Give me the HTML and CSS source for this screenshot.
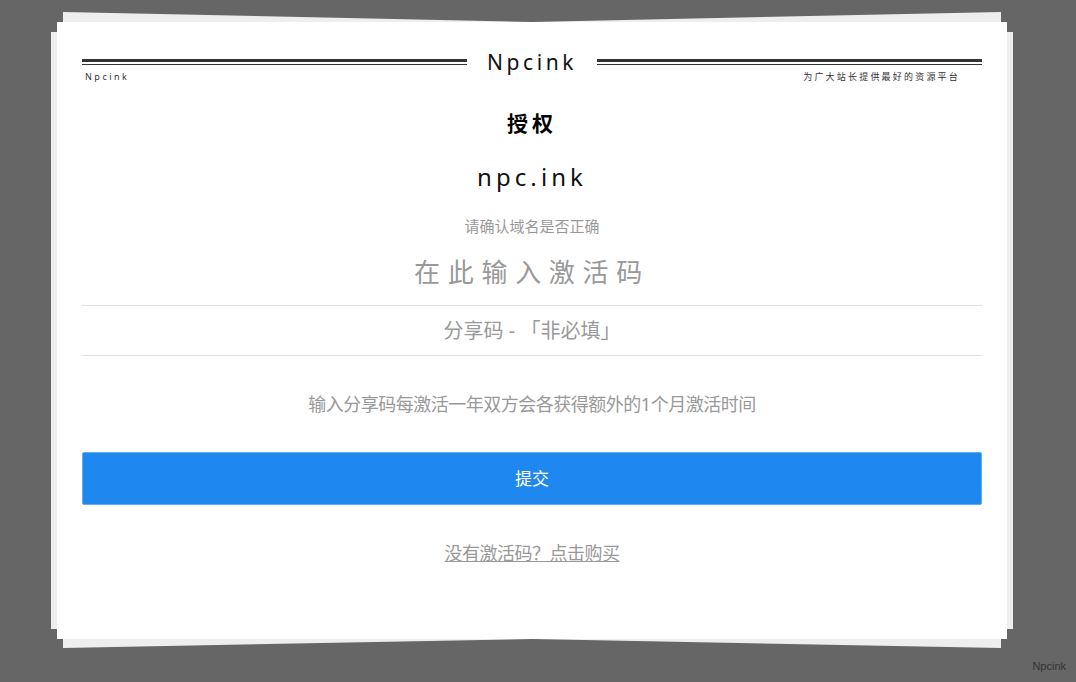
FILE: index.html
```html
<!DOCTYPE html>
<html lang="zh-CN">
<head>
    <meta charset="UTF-8">
    <meta name="viewport" content="width=device-width, initial-scale=1.0">
    <title>授权</title>
    <link rel="stylesheet" href="styles.css">
</head>
<body>
    <div class="stage">
        <div class="sheet sheet-wide"></div>
        <div class="sheet sheet-tall"></div>

        <div class="card">
            <div class="brand-row">
                <span class="brand-line"></span>
                <span class="brand-name">Npcink</span>
                <span class="brand-line"></span>
            </div>
            <div class="tag-row">
                <span class="tag-left">Npcink</span>
                <span class="tag-right">为广大站长提供最好的资源平台</span>
            </div>

            <h1 class="page-title">授权</h1>
            <div class="domain">npc.ink</div>
            <p class="domain-hint">请确认域名是否正确</p>

            <form class="auth-form">
                <input class="field field-code" type="text" placeholder="在此输入激活码">
                <input class="field field-share" type="text" placeholder="分享码 - 「非必填」">
                <p class="share-note">输入分享码每激活一年双方会各获得额外的1个月激活时间</p>
                <button class="submit-btn" type="button">提交</button>
            </form>

            <a class="buy-link" href="#">没有激活码？点击购买</a>
        </div>
    </div>

    <div class="corner-mark">Npcink</div>
</body>
</html>
```

FILE: styles.css
```css
html, body {
    height: 100%;
}
body {
    margin: 0;
    background: #666;
    font-family: "Noto Sans", "Noto Sans CJK SC", sans-serif;
    overflow: hidden;
}
.stage {
    position: relative;
    width: 950px;
    height: 617px;
    margin: 22px 0 0 57px;
}
.sheet {
    position: absolute;
    background: #eee;
}
.sheet-wide {
    left: -6px;
    right: -6px;
    top: 10px;
    bottom: 10px;
}
.sheet-tall {
    left: 6px;
    right: 6px;
    top: -10px;
    bottom: -9px;
    clip-path: polygon(0 0, 50% 10px, 100% 0, 100% 100%, 50% calc(100% - 9px), 0 100%);
}
.card {
    position: relative;
    box-sizing: border-box;
    height: 100%;
    padding: 25px 25px 0;
    background: #fff;
    text-align: center;
}
.brand-row {
    display: flex;
    align-items: center;
}
.brand-line {
    flex: 1;
    height: 2px;
    border-top: 3px solid #333;
    border-bottom: 1px solid #333;
}
.brand-name {
    width: 130px;
    font-size: 21px;
    line-height: 30px;
    letter-spacing: 3.6px;
    color: #111;
}
.tag-row {
    display: flex;
    justify-content: space-between;
    margin-top: -7px;
    padding: 0 22px 0 3px;
    font-size: 9px;
    line-height: 14px;
    color: #333;
}
.tag-left {
    letter-spacing: 2.5px;
}
.tag-right {
    letter-spacing: 2.2px;
}
.page-title {
    margin: 24px 0 0;
    font-size: 21px;
    line-height: 30px;
    letter-spacing: 4px;
    color: #000;
}
.domain {
    margin-top: 21px;
    font-size: 24px;
    line-height: 36px;
    letter-spacing: 4.1px;
    color: #111;
}
.domain-hint {
    margin: 22px 0 0;
    font-size: 15px;
    line-height: 18px;
    color: #999;
}
.auth-form {
    margin: 0;
}
.field {
    display: block;
    box-sizing: border-box;
    width: 100%;
    border: none;
    border-bottom: 1px solid #e0e0e0;
    outline: none;
    padding: 0;
    text-align: center;
    font-family: inherit;
    color: #666;
}
.field::placeholder {
    color: #999;
    opacity: 1;
}
.field-code {
    height: 71px;
    padding-top: 4px;
    font-size: 26px;
    letter-spacing: 7.7px;
}
.field-share {
    height: 50px;
    font-size: 20px;
}
.share-note {
    margin: 34px 0 0;
    font-size: 18px;
    line-height: 28px;
    letter-spacing: -0.5px;
    color: #999;
}
.submit-btn {
    display: block;
    box-sizing: border-box;
    width: 100%;
    height: 53px;
    margin-top: 34px;
    padding: 0 0 2px;
    border: 1px solid #62aef5;
    border-radius: 2px;
    background: #1e87f0;
    color: #fff;
    font-family: inherit;
    font-size: 17px;
    cursor: pointer;
}
.buy-link {
    display: inline-block;
    margin-top: 34px;
    font-size: 18px;
    line-height: 28px;
    letter-spacing: -0.5px;
    color: #999;
}
.corner-mark {
    position: absolute;
    right: 10px;
    bottom: 8px;
    font-family: "Liberation Sans", sans-serif;
    font-size: 11px;
    line-height: 16px;
    color: #333;
}
```
